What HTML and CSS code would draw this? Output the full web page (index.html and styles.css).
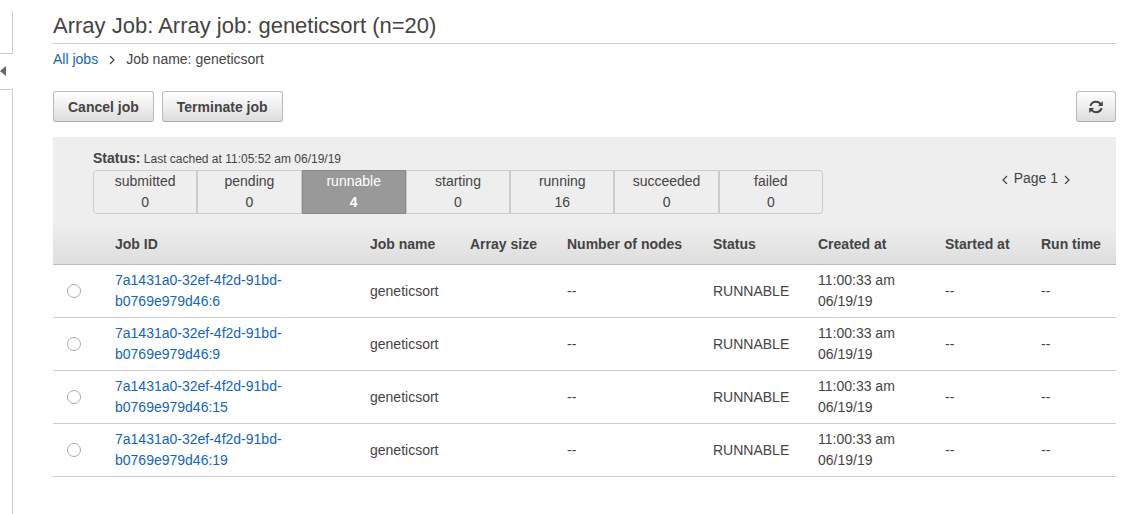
FILE: index.html
```html
<!DOCTYPE html>
<html lang="en">
<head>
<meta charset="utf-8">
<title>Array Job: geneticsort</title>
<link rel="stylesheet" href="styles.css">
</head>
<body>
<div class="layout">
  <aside class="rail">
    <div class="rail-top"></div>
    <button class="rail-toggle" aria-label="Collapse navigation"><svg width="6" height="10" viewBox="0 0 6 10"><path d="M6 0v10L0 5z" fill="#666"/></svg></button>
    <div class="rail-bottom"></div>
  </aside>
  <main class="main">
    <h1 class="title">Array Job: Array job: geneticsort (n=20)</h1>
    <nav class="crumbs" aria-label="Breadcrumb">
      <a class="link" href="#">All jobs</a>
      <svg width="6" height="10" viewBox="0 0 6 10"><path d="M1 1l4 4-4 4" fill="none" stroke="#444" stroke-width="1.2"/></svg>
      <span>Job name: geneticsort</span>
    </nav>
    <div class="actions">
      <button class="btn">Cancel job</button>
      <button class="btn">Terminate job</button>
      <button class="btn btn-refresh" aria-label="Refresh"><svg width="14" height="14" viewBox="0 0 14 14"><g fill="none" stroke="#444" stroke-width="2"><path d="M1.4 5.8C2.3 3.2 4.4 1.8 7 1.8c1.900 0 3.400.7 4.600 2.100"/><path d="M12.600 8.200C11.700 10.800 9.600 12.200 7 12.200c-1.900 0-3.400-.7-4.600-2.100"/></g><path d="M13.800 1v5H8.800zM.2 13V8h5z" fill="#444"/></svg></button>
    </div>
    <section class="panel">
      <div class="summary">
        <div class="states">
          <div class="cached"><strong class="cached-label">Status:</strong> Last cached at 11:05:52 am 06/19/19</div>
          <div class="filters">
            <button class="filter"><span>submitted</span><span>0</span></button>
            <button class="filter"><span>pending</span><span>0</span></button>
            <button class="filter selected"><span>runnable</span><span class="count">4</span></button>
            <button class="filter"><span>starting</span><span>0</span></button>
            <button class="filter"><span>running</span><span>16</span></button>
            <button class="filter"><span>succeeded</span><span>0</span></button>
            <button class="filter"><span>failed</span><span>0</span></button>
          </div>
        </div>
        <div class="pager">
          <button class="page-btn" aria-label="Previous page"><svg width="6" height="10" viewBox="0 0 6 10"><path d="M5 2L1 6l4 4" fill="none" stroke="#444" stroke-width="1.2"/></svg></button>
          <span>Page 1</span>
          <button class="page-btn" aria-label="Next page"><svg width="6" height="10" viewBox="0 0 6 10"><path d="M1 2l4 4-4 4" fill="none" stroke="#444" stroke-width="1.2"/></svg></button>
        </div>
      </div>
      <table class="jobs">
        <colgroup><col class="c-pick"><col class="c-id"><col class="c-name"><col class="c-size"><col class="c-nodes"><col class="c-status"><col class="c-created"><col class="c-started"><col class="c-run"></colgroup>
        <thead>
          <tr><th></th><th>Job ID</th><th>Job name</th><th>Array size</th><th>Number of nodes</th><th>Status</th><th>Created at</th><th>Started at</th><th>Run time</th></tr>
        </thead>
        <tbody>
          <tr><td class="pick"><input class="radio" type="radio" name="job" aria-label="Select job 6"></td><td><a class="link" href="#">7a1431a0-32ef-4f2d-91bd-b0769e979d46:6</a></td><td>geneticsort</td><td></td><td>--</td><td>RUNNABLE</td><td>11:00:33 am 06/19/19</td><td>--</td><td>--</td></tr>
          <tr><td class="pick"><input class="radio" type="radio" name="job" aria-label="Select job 9"></td><td><a class="link" href="#">7a1431a0-32ef-4f2d-91bd-b0769e979d46:9</a></td><td>geneticsort</td><td></td><td>--</td><td>RUNNABLE</td><td>11:00:33 am 06/19/19</td><td>--</td><td>--</td></tr>
          <tr><td class="pick"><input class="radio" type="radio" name="job" aria-label="Select job 15"></td><td><a class="link" href="#">7a1431a0-32ef-4f2d-91bd-b0769e979d46:15</a></td><td>geneticsort</td><td></td><td>--</td><td>RUNNABLE</td><td>11:00:33 am 06/19/19</td><td>--</td><td>--</td></tr>
          <tr><td class="pick"><input class="radio" type="radio" name="job" aria-label="Select job 19"></td><td><a class="link" href="#">7a1431a0-32ef-4f2d-91bd-b0769e979d46:19</a></td><td>geneticsort</td><td></td><td>--</td><td>RUNNABLE</td><td>11:00:33 am 06/19/19</td><td>--</td><td>--</td></tr>
        </tbody>
      </table>
    </section>
  </main>
</div>
</body>
</html>
```
FILE: styles.css
```css
* { box-sizing: border-box; }
body {
  margin: 0;
  background: #fff;
  color: #444;
  font: 14px/21px "Liberation Sans", Arial, sans-serif;
}
button { font: inherit; color: inherit; cursor: pointer; }
svg { display: block; }
.layout { display: flex; min-height: 100vh; }

.rail { display: flex; flex-direction: column; width: 13px; padding-top: 11px; }
.rail-top { height: 43px; border: solid #ccc; border-width: 0 1px 1px 0; }
.rail-toggle {
  display: flex;
  align-items: center;
  height: 35px;
  padding: 0 0 1px;
  border: 0;
  background: none;
}
.rail-bottom { flex: 1; border: solid #ccc; border-width: 1px 1px 0 0; }

.main { flex: 1; min-width: 0; padding: 9px 18px 0 40px; }
.title {
  margin: 0;
  padding-bottom: 1px;
  border-bottom: 1px solid #ccc;
  font-size: 22px;
  line-height: 33px;
  font-weight: 400;
}
.crumbs { display: flex; align-items: center; gap: 11px; padding-top: 5px; }
.link { color: #1166bb; text-decoration: none; }

.actions { display: flex; gap: 8px; padding: 21px 0 15px; }
.btn {
  height: 31px;
  padding: 1px 14px 0;
  border: 1px solid #bbb;
  border-bottom-color: #aaa;
  border-radius: 3px;
  background: linear-gradient(#fff, #ddd);
  font-weight: 700;
}
.btn-refresh { width: 40px; padding: 0 12px; margin-left: auto; }

.summary {
  display: flex;
  justify-content: space-between;
  padding: 11px 46px 10px 40px;
  background: #eee;
}
.states { flex: 0 1 730px; }
.cached { font-size: 12px; }
.cached-label { font-size: 14px; }
.filters { display: flex; }
.filter {
  flex: 1;
  display: flex;
  flex-direction: column;
  align-items: center;
  padding: 0;
  border: 1px solid #ccc;
  background: #eee;
}
.filter:first-child { border-radius: 4px 0 0 4px; }
.filter:last-child { border-radius: 0 4px 4px 0; }
.filter.selected { border-color: #888; background: #999; color: #fff; }
.filter .count { font-weight: 700; }
.pager { display: flex; align-items: center; align-self: flex-start; gap: 6px; padding-top: 20px; }
.page-btn { padding: 0; border: 0; background: none; }

.jobs { width: 100%; table-layout: fixed; border-collapse: separate; border-spacing: 0; }
.c-pick { width: 47px; }
.c-id { width: 255px; }
.c-name { width: 100px; }
.c-size { width: 97px; }
.c-nodes { width: 146px; }
.c-status { width: 105px; }
.c-created { width: 127px; }
.c-started { width: 96px; }
.c-run { width: 90px; }
.jobs thead { background: linear-gradient(#eee, #ddd); }
.jobs th { padding: 10px 0 9px 15px; border-bottom: 1px solid #bbb; text-align: left; white-space: nowrap; }
.jobs td { padding: 5px 15px; border-bottom: 1px solid #ccc; }
.jobs td.pick { padding: 5px 14px; }
.radio {
  appearance: none;
  display: block;
  width: 14px;
  height: 14px;
  margin: 0;
  border: 1px solid #aaa;
  border-radius: 50%;
  background: #fff;
}
.radio:checked { background: radial-gradient(#444 40%, #fff 45%); }
```
